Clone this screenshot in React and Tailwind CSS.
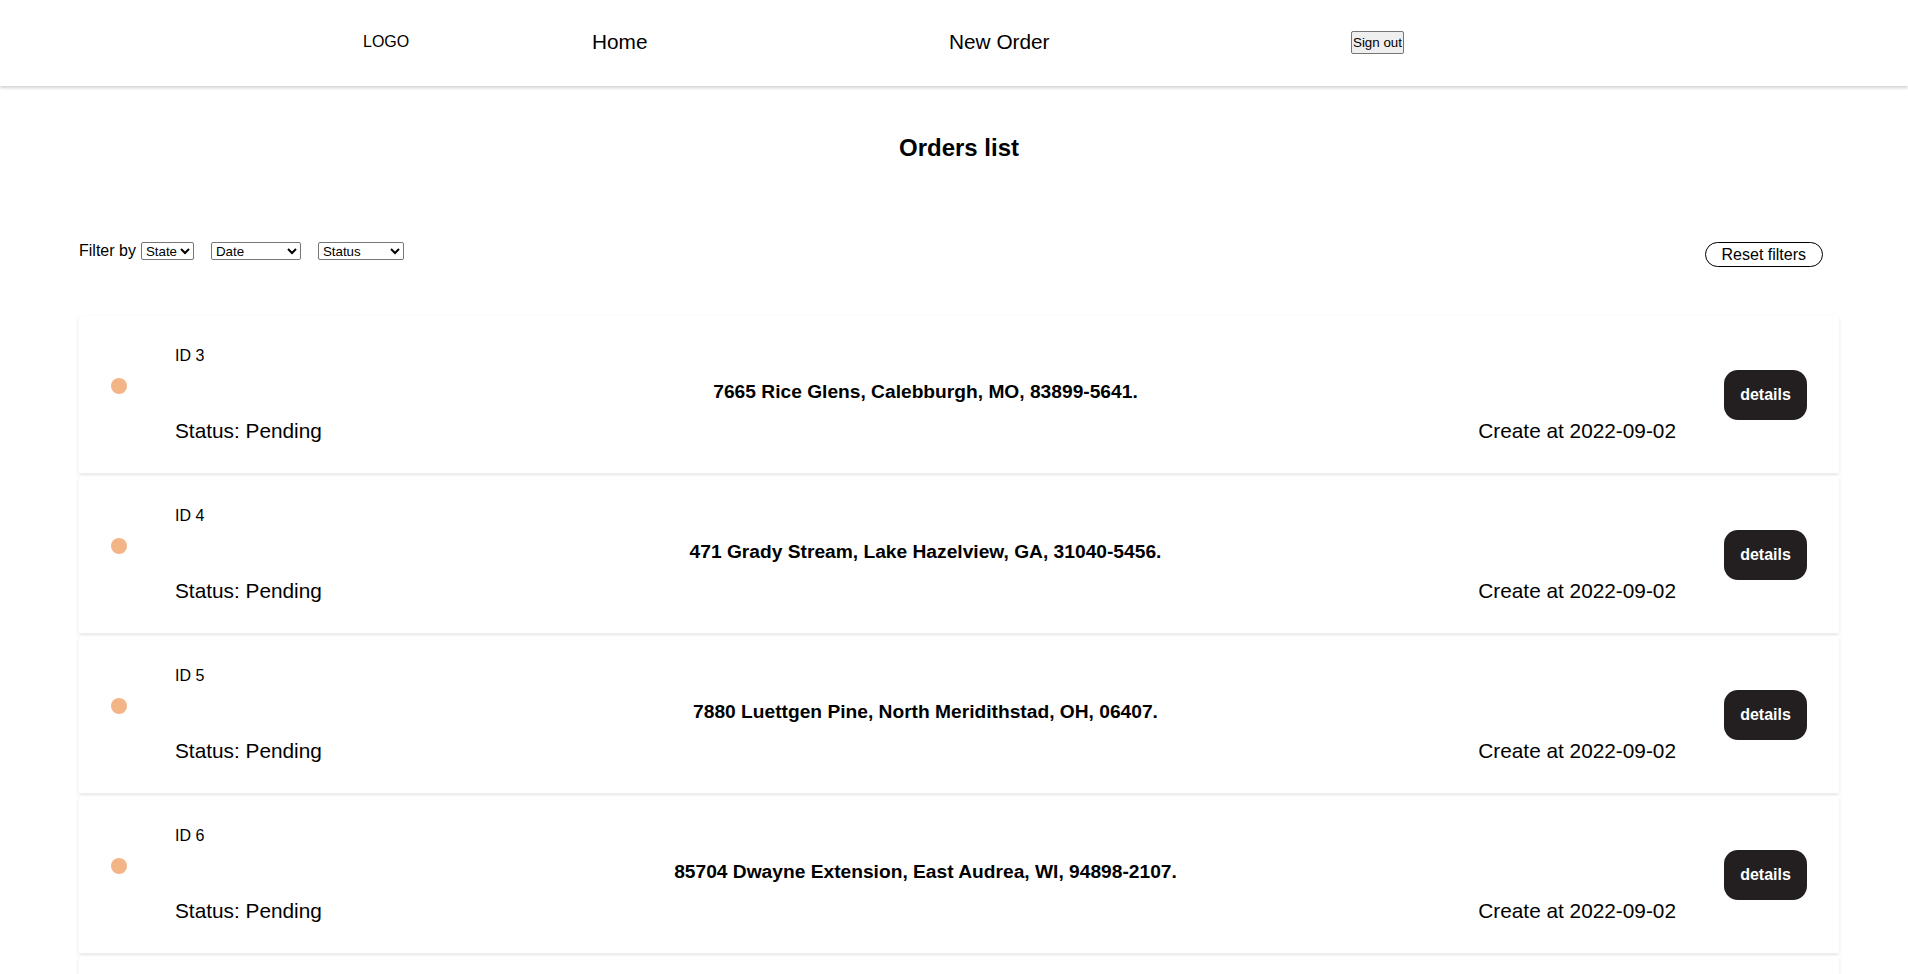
import { useState } from "react";

const orders = [
  { id: 3, address: "7665 Rice Glens, Calebburgh, MO, 83899-5641.", status: "Pending", created: "2022-09-02" },
  { id: 4, address: "471 Grady Stream, Lake Hazelview, GA, 31040-5456.", status: "Pending", created: "2022-09-02" },
  { id: 5, address: "7880 Luettgen Pine, North Meridithstad, OH, 06407.", status: "Pending", created: "2022-09-02" },
  { id: 6, address: "85704 Dwayne Extension, East Audrea, WI, 94898-2107.", status: "Pending", created: "2022-09-02" },
  { id: 7, address: "312 Kuhlman Forges, West Trentonside, NV, 58302.", status: "Pending", created: "2022-09-02" },
  { id: 8, address: "9021 Ondricka Plains, Port Delphia, TX, 77433-1290.", status: "Pending", created: "2022-09-02" },
];

function Header() {
  return (
    <header className="h-[86px] pb-[2px] bg-white shadow-[0_2px_3px_rgba(0,0,0,0.18)] flex items-center pl-[363px]">
      <div className="w-[229px] text-[16px]">LOGO</div>
      <a className="w-[357px] text-[20.8px] leading-[24px]">Home</a>
      <a className="w-[402px] text-[20.8px] leading-[24px]">New Order</a>
      <button className="h-[23px] px-px border border-[#767676] rounded-[2px] bg-[#efefef] text-[13.33px] leading-[15px]">
        Sign out
      </button>
    </header>
  );
}

function Filters() {
  const [state, setState] = useState("");
  const [date, setDate] = useState("");
  const [status, setStatus] = useState("");

  return (
    <div className="mt-[80px] flex justify-between items-start pr-[16px]">
      <div className="flex items-center h-[18px]">
        <span className="text-[16px] leading-[18px]">Filter by</span>
        <select
          value={state}
          onChange={(e) => setState(e.target.value)}
          className="ml-[5px] w-[53px] h-[18px] border border-[#767676] rounded-[2px] bg-white text-[13.33px]"
        >
          <option value="">State</option>
        </select>
        <select
          value={date}
          onChange={(e) => setDate(e.target.value)}
          className="ml-[17px] w-[90px] h-[18px] border border-[#767676] rounded-[2px] bg-white text-[13.33px]"
        >
          <option value="">Date</option>
          <option value="newest">Newest first</option>
        </select>
        <select
          value={status}
          onChange={(e) => setStatus(e.target.value)}
          className="ml-[17px] w-[86px] h-[18px] border border-[#767676] rounded-[2px] bg-white text-[13.33px]"
        >
          <option value="">Status</option>
          <option value="pending">Pending</option>
        </select>
      </div>
      <button className="h-[25px] px-4 border border-black rounded-full text-[16px] leading-[18px]">
        Reset filters
      </button>
    </div>
  );
}

function OrderCard({ order }) {
  return (
    <div className="h-[157px] bg-white shadow-[0_2px_4px_rgba(0,0,0,0.1)] flex items-center px-8 gap-12">
      <span className="w-4 h-4 mb-[17px] rounded-full bg-[#f3b588] shrink-0" />
      <div className="flex-1 flex flex-col">
        <span className="text-[16px] leading-[18px]">ID {order.id}</span>
        <h3 className="mt-[16px] text-center font-bold text-[19.2px] leading-[22px]">{order.address}</h3>
        <div className="mt-[16px] flex justify-between text-[20.8px] leading-[24px]">
          <span>Status: {order.status}</span>
          <span>Create at {order.created}</span>
        </div>
      </div>
      <button className="w-[83px] h-[50px] shrink-0 rounded-[14px] bg-[#231f20] text-white font-bold text-[16px]">
        details
      </button>
    </div>
  );
}

export default function App() {
  return (
    <div className="min-h-screen bg-white text-black font-['Liberation_Sans',Arial,sans-serif]">
      <Header />
      <main className="pl-[79px] w-[1839px]">
        <h2 className="mt-[48px] text-center font-bold text-[24px] leading-[28px]">Orders list</h2>
        <Filters />
        <div className="mt-[49px] flex flex-col gap-[3px] pb-8">
          {orders.map((o) => (
            <OrderCard key={o.id} order={o} />
          ))}
        </div>
      </main>
    </div>
  );
}
